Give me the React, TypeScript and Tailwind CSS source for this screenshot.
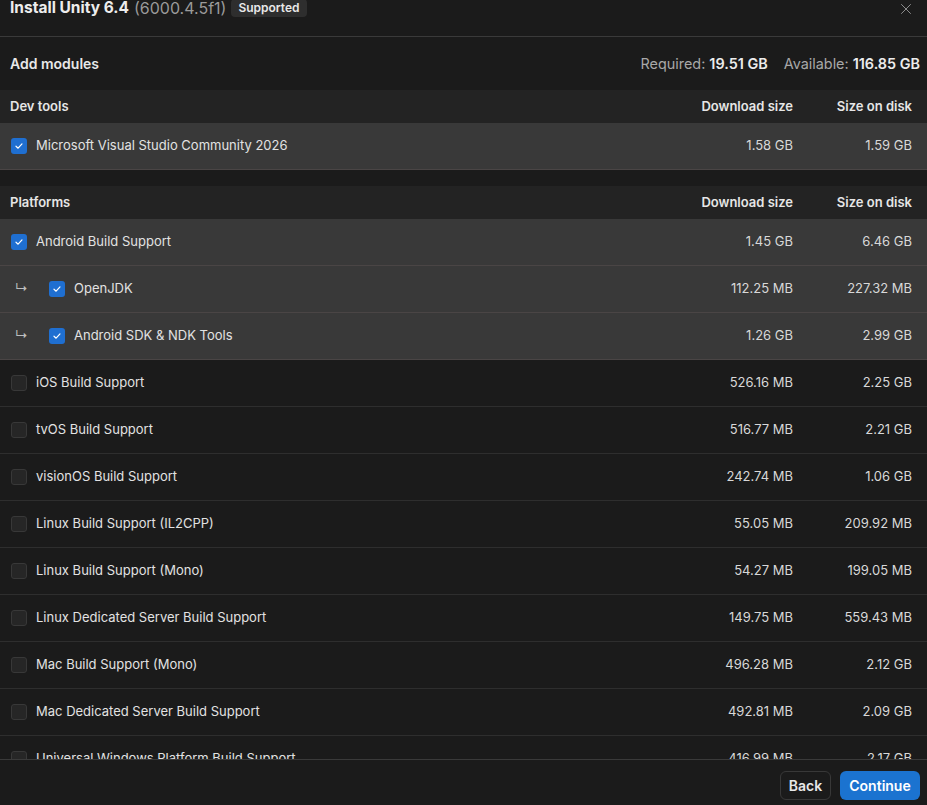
import { X } from 'lucide-react'

type Mod = {
  name: string
  download: string
  disk: string
  checked?: boolean
  child?: boolean
}

const devTools: Mod[] = [
  { name: 'Microsoft Visual Studio Community 2026', download: '1.58 GB', disk: '1.59 GB', checked: true },
]

const platforms: Mod[] = [
  { name: 'Android Build Support', download: '1.45 GB', disk: '6.46 GB', checked: true },
  { name: 'OpenJDK', download: '112.25 MB', disk: '227.32 MB', checked: true, child: true },
  { name: 'Android SDK & NDK Tools', download: '1.26 GB', disk: '2.99 GB', checked: true, child: true },
  { name: 'iOS Build Support', download: '526.16 MB', disk: '2.25 GB' },
  { name: 'tvOS Build Support', download: '516.77 MB', disk: '2.21 GB' },
  { name: 'visionOS Build Support', download: '242.74 MB', disk: '1.06 GB' },
  { name: 'Linux Build Support (IL2CPP)', download: '55.05 MB', disk: '209.92 MB' },
  { name: 'Linux Build Support (Mono)', download: '54.27 MB', disk: '199.05 MB' },
  { name: 'Linux Dedicated Server Build Support', download: '149.75 MB', disk: '559.43 MB' },
  { name: 'Mac Build Support (Mono)', download: '496.28 MB', disk: '2.12 GB' },
  { name: 'Mac Dedicated Server Build Support', download: '492.81 MB', disk: '2.09 GB' },
  { name: 'Universal Windows Platform Build Support', download: '416.99 MB', disk: '2.17 GB' },
]

function Checkbox({ checked }: { checked?: boolean }) {
  if (checked) {
    return (
      <div className="w-4 h-4 rounded-[3px] bg-[#1f6fd1] flex items-center justify-center shrink-0">
        <svg width="10" height="10" viewBox="0 0 10 10" fill="none">
          <path d="M2 5.2 L4.1 7.2 L8 2.9" stroke="#ffffff" strokeWidth="1.2" strokeLinecap="round" strokeLinejoin="round" />
        </svg>
      </div>
    )
  }
  return <div className="w-4 h-4 rounded-[3px] bg-[#262626] border border-[#383838] shrink-0" />
}

function SectionHeader({ title }: { title: string }) {
  return (
    <div className="h-[33px] bg-[#232323] flex items-center pl-[10px] pr-[15px] text-[13px] font-semibold text-[#e6e6e6]">
      <div className="flex-1">{title}</div>
      <div className="w-[120px] text-right">Download size</div>
      <div className="w-[119px] text-right">Size on disk</div>
    </div>
  )
}

function Row({ mod }: { mod: Mod }) {
  return (
    <div
      className={
        mod.checked
          ? 'h-[47px] bg-[#393939] border-b border-[#4a4545] flex items-center pl-[11px] pr-[15px] text-[13px] text-[#e2e2e2]'
          : 'h-[47px] border-b border-[#2e2e2e] flex items-center pl-[11px] pr-[15px] text-[13px] text-[#e2e2e2]'
      }
    >
      <div className="flex-1 flex items-center min-w-0">
        {mod.child && <span className="w-[38px] pl-[4px] text-[#bdbdbd] text-[13px]">↳</span>}
        <Checkbox checked={mod.checked} />
        <span className="ml-[9px] whitespace-nowrap">{mod.name}</span>
      </div>
      <div className="w-[120px] text-right text-[#d8d8d8]">{mod.download}</div>
      <div className="w-[119px] text-right text-[#d8d8d8]">{mod.disk}</div>
    </div>
  )
}

export default function App() {
  return (
    <div
      className="w-[927px] h-[805px] bg-[#1b1b1b] flex flex-col overflow-hidden text-[#e6e6e6]"
      style={{ fontFamily: 'Inter, "Liberation Sans", sans-serif' }}
    >
      <div className="h-[37px] shrink-0 border-b border-[#3a3a3a] flex items-start pl-[10px] pr-[12px]">
        <div className="flex items-center gap-[5px] -mt-[1px]">
          <span className="text-[15.5px] leading-[18px] font-bold text-[#ededed]">Install Unity 6.4</span>
          <span className="text-[16px] leading-[18px] text-[#9a9a9a]">(6000.4.5f1)</span>
          <span className="px-[7px] h-[18px] flex items-center rounded-[4px] bg-[#2e2e2e] text-[12px] font-semibold text-[#e8e8e8]">
            Supported
          </span>
        </div>
        <div className="flex-1" />
        <X className="w-[18px] h-[18px] text-[#9a9a9a]" strokeWidth={1.2} />
      </div>

      <div className="flex-1 min-h-0 overflow-hidden">
        <div className="h-[53px] flex items-center pl-[10px] pr-[7px]">
          <div className="flex-1 text-[14px] font-semibold text-[#e8e8e8]">Add modules</div>
          <div className="text-[14.4px] text-[#a8a8a8]">
            Required: <span className="font-semibold text-[#ececec]">19.51 GB</span>
          </div>
          <div className="ml-[16px] text-[14.4px] text-[#a8a8a8]">
            Available: <span className="font-semibold text-[#ececec]">116.85 GB</span>
          </div>
        </div>

        <SectionHeader title="Dev tools" />
        {devTools.map((m) => (
          <Row key={m.name} mod={m} />
        ))}

        <div className="h-[16px]" />

        <SectionHeader title="Platforms" />
        {platforms.map((m) => (
          <Row key={m.name} mod={m} />
        ))}
      </div>

      <div className="h-[46px] shrink-0 border-t border-[#3a3a3a] flex items-center justify-end gap-[9px] pr-[7px] pt-[5px]">
        <button className="h-[29px] w-[51px] rounded-[6px] border border-[#383838] text-[14px] font-semibold text-[#e8e8e8]">
          Back
        </button>
        <button className="h-[29px] w-[80px] rounded-[6px] bg-[#1b73d0] text-[14px] font-semibold text-white">
          Continue
        </button>
      </div>
    </div>
  )
}
